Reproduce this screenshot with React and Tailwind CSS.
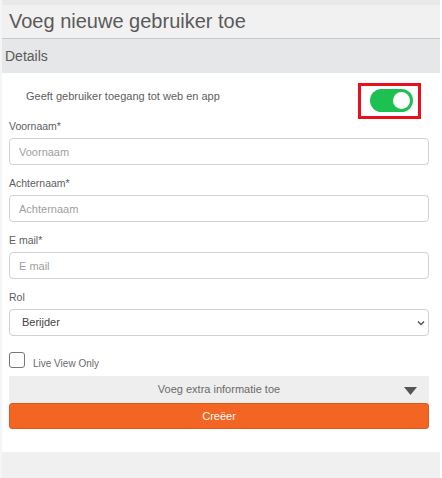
import React from "react";

function Field({ label, placeholder, first }) {
  return (
    <div className={first ? "" : "mt-[11px]"}>
      <div className="h-[14px] leading-[14px] text-[10.5px] text-[#5e5e5e] mb-[5px]">{label}</div>
      <input
        className="block w-full h-[27px] border border-[#d2d2d2] rounded-[4px] px-[9px] text-[11px] text-[#333] placeholder:text-[#a0a0a0] outline-none bg-white"
        placeholder={placeholder}
      />
    </div>
  );
}

export default function App() {
  return (
    <div className="w-[442px] h-[478px] bg-white font-['Liberation_Sans',Arial,sans-serif]">
      <div className="w-[440px] h-full border-l-2 border-[#f5f5f5] flex flex-col bg-[#f0f0f0]">
        <div className="h-[5px] bg-[#e9e9e9]" />
        <div className="h-[33px] bg-[#f1f1f1] flex items-center pl-[7px] pb-[2px] text-[20px] text-[#5a5a5a]">
          Voeg nieuwe gebruiker toe
        </div>
        <div className="h-[35px] bg-[#e6e7e9] border-t border-[#c8c8c8] flex items-center pl-[3px] text-[14px] text-[#5a5a5a]">
          Details
        </div>
        <div className="bg-white pl-[7px] pr-[11px] pt-[10px] pb-[23px]">
          <div className="flex h-[36px]">
            <div className="ml-[17px] mt-[7px] leading-[13px] text-[11px] text-[#5e5e5e]">
              Geeft gebruiker toegang tot web en app
            </div>
            <div className="ml-auto mr-[8px] w-[63px] h-[36px] border-[3px] border-[#e8101c] pl-[9px] pt-[3px]">
              <div className="w-[43px] h-[23px] rounded-full bg-[#1dc152] relative">
                <div className="absolute right-[3px] top-[3px] w-[17px] h-[17px] rounded-full bg-white" />
              </div>
            </div>
          </div>
          <Field label="Voornaam*" placeholder="Voornaam" first />
          <Field label="Achternaam*" placeholder="Achternaam" />
          <Field label="E mail*" placeholder="E mail" />
          <div className="mt-[11px]">
            <div className="h-[14px] leading-[14px] text-[10.5px] text-[#5e5e5e] mb-[5px]">Rol</div>
            <div className="relative">
              <select className="appearance-none block w-full h-[27px] border border-[#d2d2d2] rounded-[4px] pl-[12px] text-[11px] text-[#444] bg-white outline-none">
                <option>Berijder</option>
              </select>
              <svg className="absolute right-[4px] top-[11px]" width="8" height="6" viewBox="0 0 8 6">
                <path d="M1 1.5 L4 4.5 L7 1.5" fill="none" stroke="#555" strokeWidth="1.5" />
              </svg>
            </div>
          </div>
          <div className="flex mt-[16px] h-[16px]">
            <div className="w-[16px] h-[16px] border border-[#767676] rounded-[3px] bg-white" />
            <div className="ml-[8px] mt-[6px] leading-[12px] text-[10px] text-[#6a6a6a]">Live View Only</div>
          </div>
          <div className="mt-[8px] h-[27px] bg-[#eeeeee] flex items-center justify-center relative text-[11px] text-[#6a6a6a]">
            Voeg extra informatie toe
            <svg className="absolute right-[12px] top-[11px]" width="13" height="8" viewBox="0 0 13 8">
              <path d="M0 0 L13 0 L6.5 8 Z" fill="#555" />
            </svg>
          </div>
          <div className="h-[26px] bg-[#f26522] border border-[#e0581a] rounded-[3px] flex items-center justify-center text-[11px] text-white">
            Creëer
          </div>
        </div>
      </div>
    </div>
  );
}
